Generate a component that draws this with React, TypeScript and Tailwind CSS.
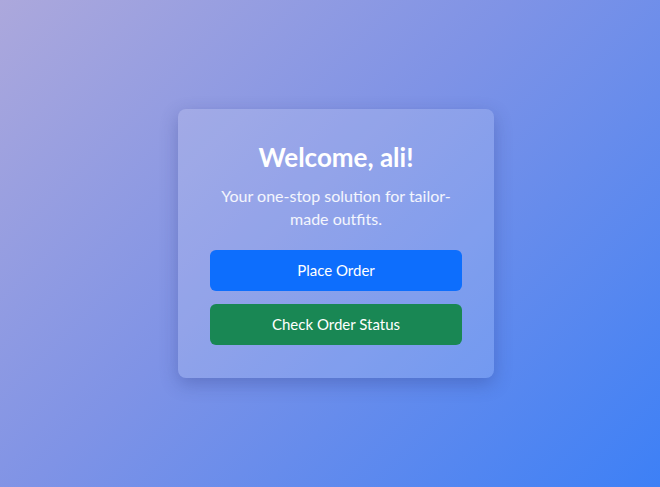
export default function App() {
  return (
    <div
      className="min-h-screen w-full flex items-center justify-center pl-[12px] bg-[linear-gradient(135deg,#aca8dc_0%,#7f93e6_45%,#3d80f6_100%)]"
      style={{ fontFamily: 'Lato, "Open Sans", sans-serif' }}
    >
      <div className="w-[316px] rounded-lg bg-white/15 px-8 pt-[32px] pb-[33px] text-center shadow-[0_6px_18px_rgba(40,50,120,0.3)]">
        <h2 className="text-[26px] font-bold leading-[33px] text-white mb-[10px]">Welcome, ali!</h2>
        <p className="mx-auto w-[236px] text-[16px] font-normal leading-[23px] text-white/90 mb-[20px]">
          Your one-stop solution for tailor-made outfits.
        </p>
        <div className="flex flex-col gap-[13px]">
          <button
            type="button"
            className="w-full h-[41px] rounded-md bg-[#0d6efd] text-[15px] text-white"
          >
            Place Order
          </button>
          <button
            type="button"
            className="w-full h-[41px] rounded-md bg-[#198754] text-[15px] text-white"
          >
            Check Order Status
          </button>
        </div>
      </div>
    </div>
  );
}
